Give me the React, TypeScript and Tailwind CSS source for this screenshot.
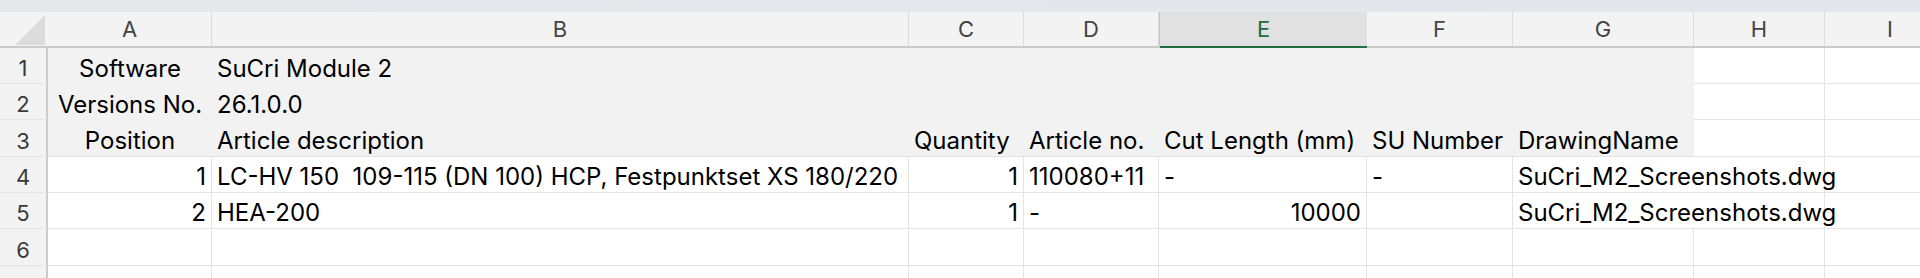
import React from 'react';

const cols = [
  { key: 'A', w: 164 },
  { key: 'B', w: 697 },
  { key: 'C', w: 115 },
  { key: 'D', w: 135 },
  { key: 'E', w: 208 },
  { key: 'F', w: 146 },
  { key: 'G', w: 181 },
  { key: 'H', w: 131 },
  { key: 'I', w: 131 },
];

type Cell = { t?: string; a?: 'l' | 'r' | 'c'; span?: number };

// rows 1-3 are the gray "info" block (A..G), rows 4+ are plain sheet rows
const rows: { h: number; gray?: boolean; label?: boolean; cells: Cell[] }[] = [
  { h: 36, gray: true, cells: [{ t: 'Software', a: 'c' }, { t: 'SuCri Module 2' }, {}, {}, {}, {}, {}, {}, {}] },
  { h: 36, gray: true, cells: [{ t: 'Versions No.', a: 'c' }, { t: '26.1.0.0' }, {}, {}, {}, {}, {}, {}, {}] },
  {
    h: 37,
    gray: true,
    cells: [
      { t: 'Position', a: 'c' },
      { t: 'Article description' },
      { t: 'Quantity' },
      { t: 'Article no.' },
      { t: 'Cut Length (mm)' },
      { t: 'SU Number' },
      { t: 'DrawingName' },
      {},
      {},
    ],
  },
  {
    h: 36,
    cells: [
      { t: '1', a: 'r' },
      { t: 'LC-HV 150\u00a0\u00a0109-115 (DN 100) HCP, Festpunktset XS 180/220' },
      { t: '1', a: 'r' },
      { t: '110080+11' },
      { t: '-' },
      { t: '-' },
      { t: 'SuCri_M2_Screenshots.dwg', span: 2 },
      {},
    ],
  },
  {
    h: 36,
    cells: [
      { t: '2', a: 'r' },
      { t: 'HEA-200' },
      { t: '1', a: 'r' },
      { t: '-' },
      { t: '10000', a: 'r' },
      {},
      { t: 'SuCri_M2_Screenshots.dwg', span: 2 },
      {},
    ],
  },
  { h: 37, cells: [{}, {}, {}, {}, {}, {}, {}, {}, {}] },
  // row 7 only peeks in at the bottom edge, its number is below the fold
  { h: 36, label: false, cells: [{}, {}, {}, {}, {}, {}, {}, {}, {}] },
];

const font = { fontFamily: 'Inter, "Liberation Sans", sans-serif' };

export default function App() {
  return (
    <div className="w-[1920px] h-[278px] overflow-hidden bg-white text-black" style={font}>
      {/* Top strip */}
      <div className="h-[12px] bg-gradient-to-r from-[#e6e8ec] to-[#e3e5ea]" />

      {/* Column headers */}
      <div className="flex h-[36px] bg-[#f3f3f3] border-b-2 border-[#cbcbcb]">
        <div className="w-[48px] shrink-0 flex items-end justify-end pr-[2px] pb-[1px]">
          <svg width="31" height="30" viewBox="0 0 31 30">
            <polygon points="30,0 30,30 0,30" fill="#dcdcdc" />
          </svg>
        </div>
        {cols.map((c) =>
          c.key === 'E' ? (
            <div
              key={c.key}
              style={{ width: c.w }}
              className="shrink-0 flex items-center justify-center bg-[#e1e1e1] border-l border-[#c4c4c4] text-[22px] text-[#1e6b3c] relative"
            >
              E
              <div className="absolute left-0 right-0 -bottom-[2px] h-[2px] bg-[#1e6e3f]" />
            </div>
          ) : (
            <div
              key={c.key}
              style={{ width: c.w }}
              className="shrink-0 flex items-center justify-center border-r border-[#dcdcdc] text-[22px] text-[#444444]"
            >
              {c.key}
            </div>
          )
        )}
      </div>

      {/* Sheet rows */}
      {rows.map((r, ri) => (
        <div key={ri} className="flex" style={{ height: r.h }}>
          <div className="w-[48px] shrink-0 border-r-2 border-[#cbcbcb] border-b border-b-[#e3e3e3] bg-[#f3f3f3] flex items-end justify-center pb-[4px] text-[22px] leading-none text-[#3a3a3a]">
            {r.label === false ? null : ri + 1}
          </div>
          {(() => {
            let ci = 0;
            return r.cells.map((cell, k) => {
              const span = cell.span ?? 1;
              let w = 0;
              for (let s = 0; s < span; s++) w += cols[ci + s]?.w ?? 0;
              const colIdx = ci;
              ci += span;
              const inGray = r.gray && colIdx < 7;
              const align =
                cell.a === 'r' ? 'justify-end pr-[5px]' : cell.a === 'c' ? 'justify-center' : 'justify-start pl-[5px]';
              return (
                <div
                  key={k}
                  style={{ width: w }}
                  className={
                    'shrink-0 flex items-end pb-[3px] whitespace-nowrap text-[24px] leading-none ' +
                    align +
                    (inGray
                      ? ' bg-[#f2f2f2]' + (ri === 2 ? ' border-b border-[#e3e3e3]' : '')
                      : ' border-r border-b border-[#e3e3e3]')
                  }
                >
                  <span>{cell.t}</span>
                </div>
              );
            });
          })()}
        </div>
      ))}
    </div>
  );
}
